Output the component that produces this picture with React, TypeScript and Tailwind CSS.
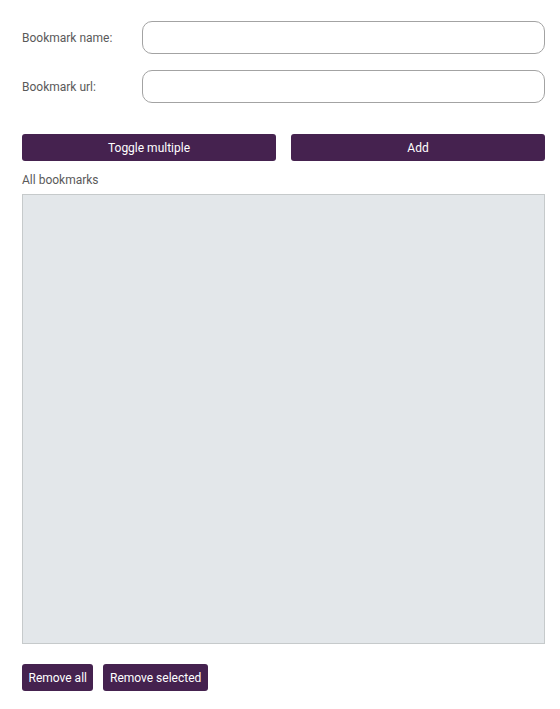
export default function App() {
  return (
    <div className="w-[560px] h-[709px] bg-white pl-[22px] pr-[15px] pt-[21px] text-[12px]" style={{ fontFamily: "Roboto, 'Liberation Sans', sans-serif" }}>
      <div className="flex flex-col gap-[16px]">
        <div className="flex items-center">
          <label className="w-[120px] text-[#5a5a5a]">Bookmark name:</label>
          <input className="flex-1 h-[33px] rounded-[10px] border border-[#a3a3a3] px-2 outline-none" />
        </div>
        <div className="flex items-center">
          <label className="w-[120px] text-[#5a5a5a]">Bookmark url:</label>
          <input className="flex-1 h-[33px] rounded-[10px] border border-[#a3a3a3] px-2 outline-none" />
        </div>
      </div>
      <div className="flex gap-[15px] mt-[31px]">
        <button className="flex-1 h-[27px] rounded-[3px] bg-[#45224f] text-white">Toggle multiple</button>
        <button className="flex-1 h-[27px] rounded-[3px] bg-[#45224f] text-white">Add</button>
      </div>
      <div className="mt-[11px] text-[#5a5a5a] leading-[16px]">All bookmarks</div>
      <div className="mt-[6px] h-[450px] bg-[#e3e7ea] border border-[#c6cacb]"></div>
      <div className="flex gap-[10px] mt-[20px]">
        <button className="h-[27px] px-[6.5px] rounded-[3px] bg-[#45224f] text-white">Remove all</button>
        <button className="h-[27px] px-[6.5px] rounded-[3px] bg-[#45224f] text-white">Remove selected</button>
      </div>
    </div>
  );
}
